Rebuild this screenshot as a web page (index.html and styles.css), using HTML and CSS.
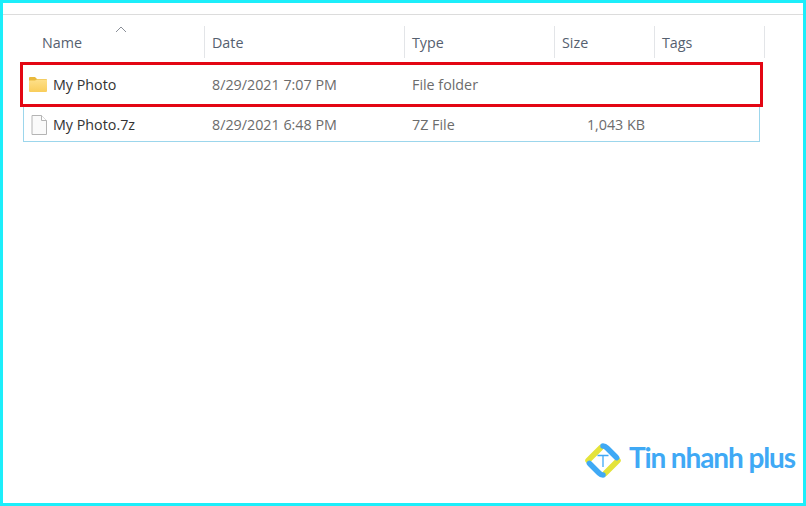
FILE: index.html
```html
<!DOCTYPE html>
<html lang="en">
<head>
<meta charset="utf-8">
<title>My Photo</title>
<link rel="stylesheet" href="styles.css">
</head>
<body>
<main class="frame">
  <div class="topline"></div>
  <div class="sort"><svg width="12" height="7" viewBox="0 0 12 7"><path d="M1 6 L6 1 L11 6" fill="none" stroke="#8a8f98" stroke-width="1"/></svg></div>
  <header class="cols head">
    <div class="hc">Name</div>
    <div class="hc">Date</div>
    <div class="hc">Type</div>
    <div class="hc">Size</div>
    <div class="hc">Tags</div>
  </header>
  <section class="list">
    <div class="row selected">
      <div class="name">
        <svg class="ico" width="18" height="15" viewBox="0 0 18 15">
          <defs><linearGradient id="fg" x1="0" y1="0" x2="0" y2="1"><stop offset="0" stop-color="#fee08a"/><stop offset="1" stop-color="#f9cd5b"/></linearGradient></defs>
          <path d="M0 1 a1 1 0 0 1 1-1 h5 l2 2 h9 a1 1 0 0 1 1 1 v2 H0z" fill="#e9b93c"/>
          <path d="M0 3.500 H6 L8 2.500 H18 V14 a1 1 0 0 1-1 1 H1 a1 1 0 0 1-1-1z" fill="url(#fg)"/>
        </svg>
        <span>My Photo</span>
      </div>
      <div>8/29/2021 7:07 PM</div>
      <div>File folder</div>
      <div></div>
    </div>
    <div class="row file">
      <div class="name">
        <svg class="ico" width="16" height="20" viewBox="0 0 16 20"><path d="M1 .5 H10.500 L15.500 5.500 V19.500 H1z" fill="#fafafa" stroke="#b4b4b4"/><path d="M10.500 .5 V5.500 H15.500" fill="#fff" stroke="#b4b4b4"/></svg>
        <span>My Photo.7z</span>
      </div>
      <div>8/29/2021 6:48 PM</div>
      <div>7Z File</div>
      <div class="size">1,043 KB</div>
    </div>
  </section>
  <aside class="logo">
    <svg width="38" height="37" viewBox="0 0 38 37">
      <path d="M4 18.500 L17 5.500 M34 18.500 L21 31.500" stroke="#e4e33a" stroke-width="5.500" stroke-linecap="round" fill="none"/>
      <path d="M19 4 Q21 4 23 6 L32 15 Q35 18 34 20 M19 33 Q17 33 15 31 L6 22 Q3 19 4 17" stroke="#3fa9f5" stroke-width="5.500" stroke-linecap="round" fill="none" stroke-dasharray="18 40"/>
      <path d="M13.500 13.500 H24.500 M19 13.500 V25" stroke="#3fa9f5" stroke-width="1.300" fill="none"/>
    </svg>
    <span class="brand">Tin nhanh plus</span>
  </aside>
</main>
</body>
</html>
```

FILE: styles.css
```css
* { box-sizing: border-box; }
html, body { margin: 0; padding: 0; }
body { width: 806px; height: 506px; overflow: hidden; background: #fff; font-family: "Open Sans", "Noto Sans", sans-serif; }
.frame { position: relative; width: 806px; height: 506px; border: 3px solid #1ceefa; background: #fff; padding-top: 11px; }
.topline { height: 1px; background: #dcdcdc; }
.cols { display: grid; grid-template-columns: 200px 200px 150px 100px 110px; }
.head { margin: 11px 0 0 2px; height: 32px; width: 760px; }
.hc { border-right: 1px solid #e3e5e8; padding: 7px 0 0 7px; font-size: 14.300px; line-height: 20px; color: #55606f; }
.hc:first-child { padding-left: 37px; }
.sort { position: absolute; left: 112px; top: 23px; line-height: 0; }
.list { margin: 4px 0 0 17px; width: 743px; }
.row { display: grid; font-size: 14.300px; line-height: 20px; color: #6c6c6c; align-items: center; }
.selected { height: 45px; border: 3px solid #e30613; grid-template-columns: 189px 200px 150px 1fr; }
.file { height: 35px; margin: 0 3px; padding-top: 2px; border: 1px solid #9cd6ec; border-top: 0; grid-template-columns: 188px 200px 150px 1fr; }
.name { display: flex; align-items: center; color: #333; }
.selected .name { padding-left: 6px; gap: 6px; }
.file .name { padding-left: 7px; gap: 6px; }
.size { text-align: right; width: 83px; }
.logo { position: absolute; right: 8px; bottom: 24px; display: flex; align-items: flex-start; gap: 7px; }
.brand { margin-top: -3px; font-family: Lato, sans-serif; font-weight: 700; font-size: 28px; line-height: 36px; color: #3fa9f5; letter-spacing: -1.100px; white-space: nowrap; }
```
